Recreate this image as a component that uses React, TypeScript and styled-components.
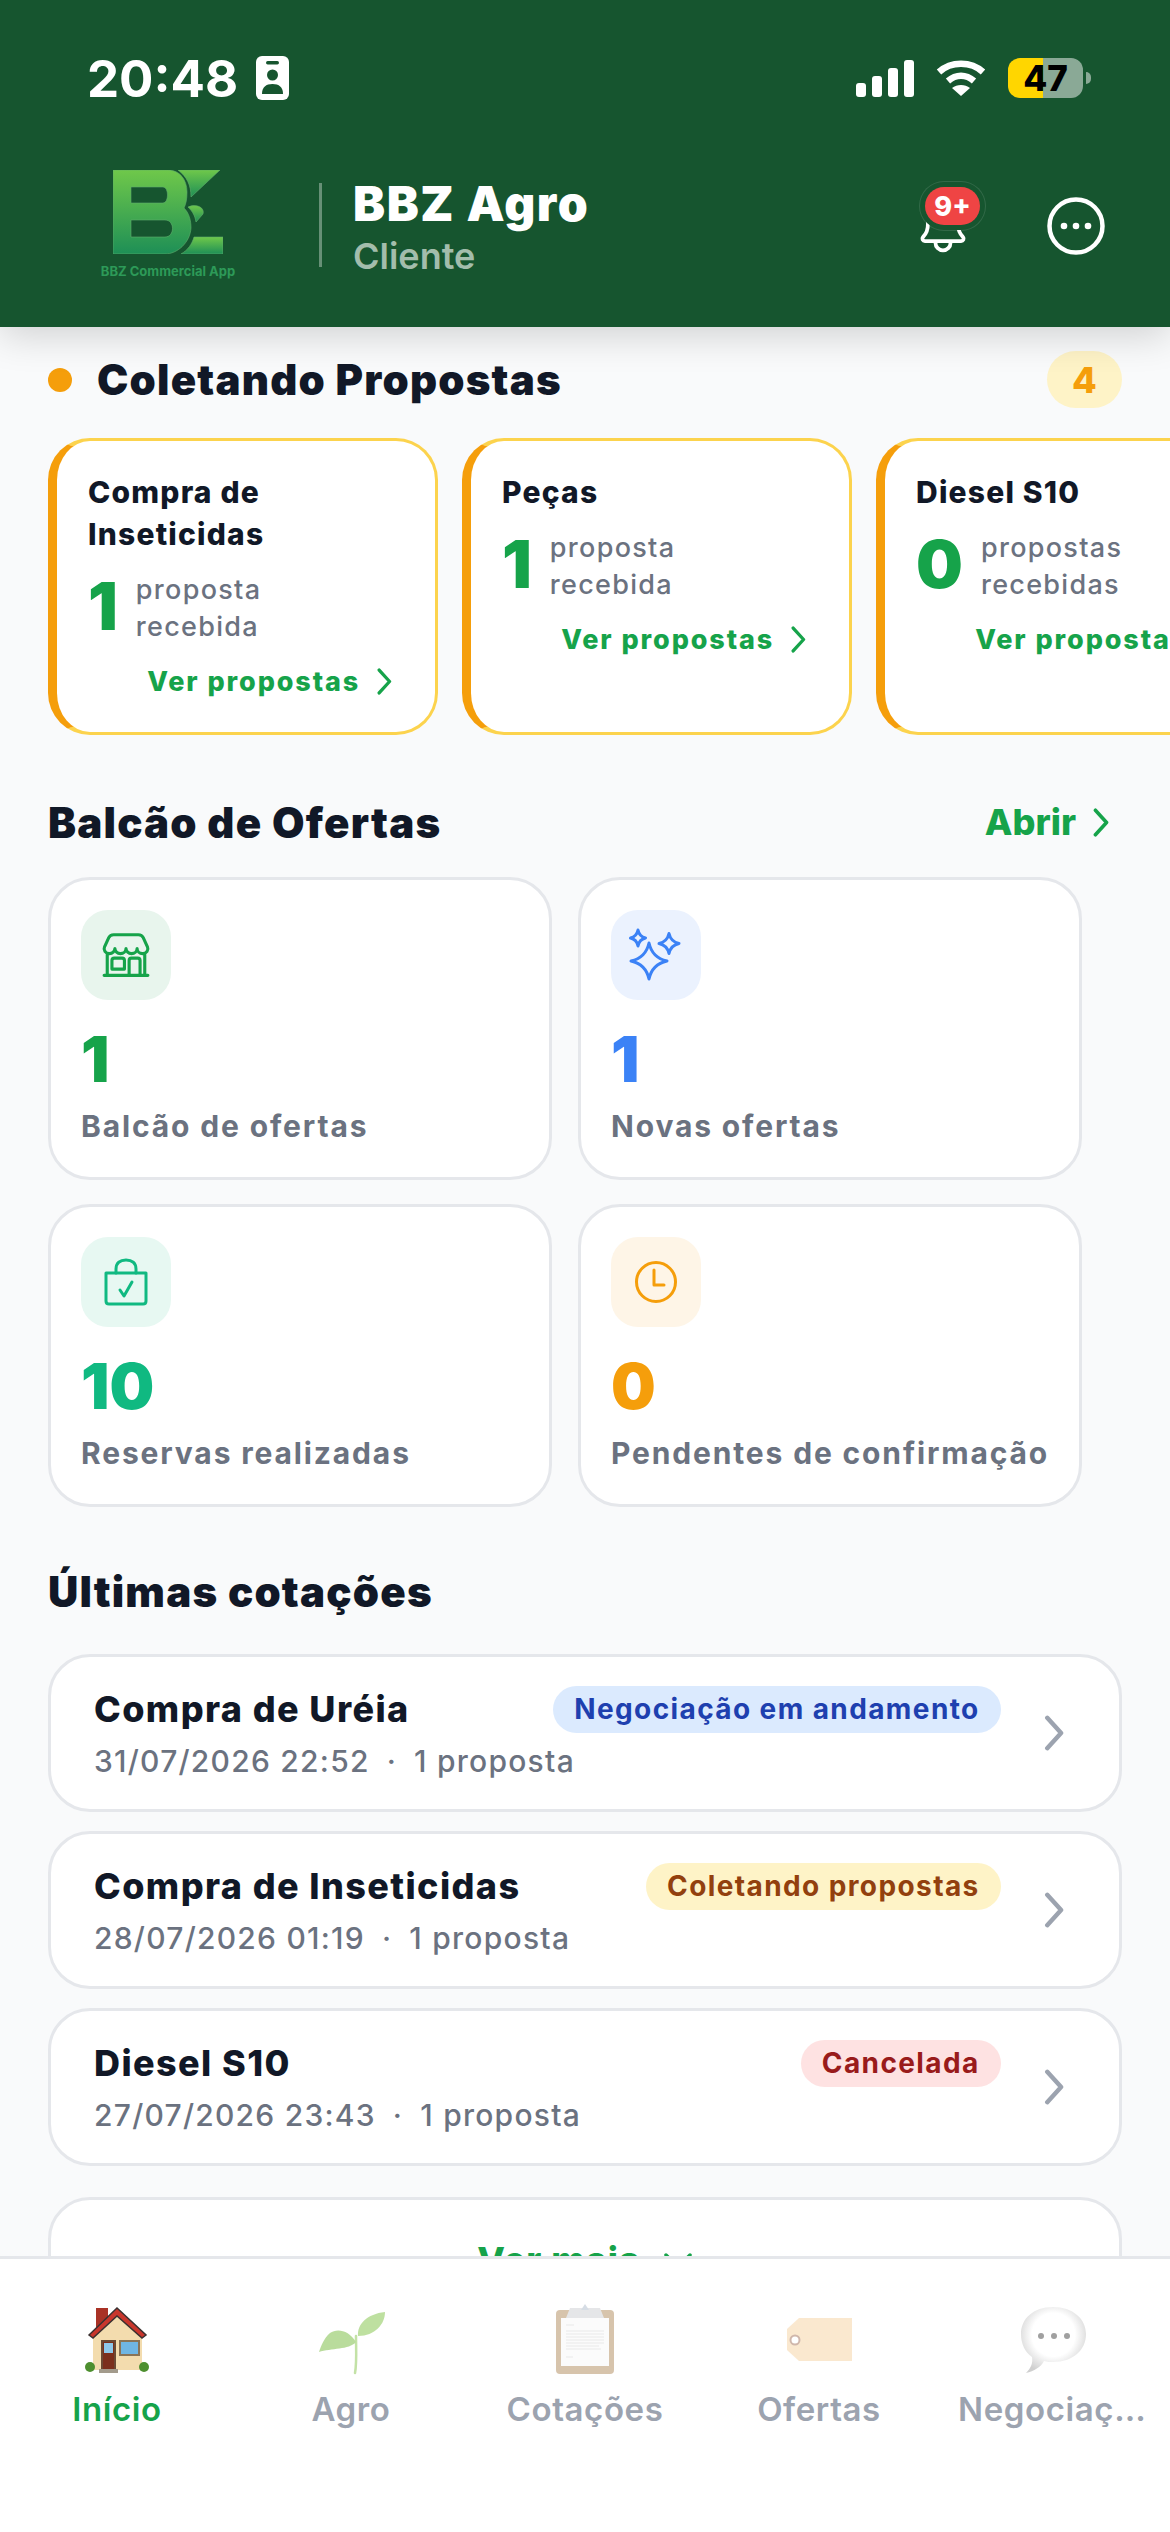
import styled, { createGlobalStyle } from "styled-components";
import { IoStorefrontOutline, IoNotificationsOutline } from "react-icons/io5";

const GlobalStyle = createGlobalStyle`
  html, body { margin: 0; padding: 0; background: #f9fafb; }
  * { box-sizing: border-box; }
  body { font-family: "Inter", "Liberation Sans", sans-serif; }
`;

const Chevron = ({ color, size = 27 }: { color: string; size?: number }) => (
  <svg width={size * 0.62} height={size} viewBox="0 0 16 26" fill="none">
    <path d="M3 2l10 11L3 24" stroke={color} strokeWidth="3.2" strokeLinecap="round" strokeLinejoin="round" />
  </svg>
);

const Logo = () => (
  <svg width="110" height="84" viewBox="0 0 110 84">
    <defs>
      <linearGradient id="bbz" x1="0" y1="0" x2="0" y2="1">
        <stop offset="0" stopColor="#6fc84a" />
        <stop offset="1" stopColor="#1e8f56" />
      </linearGradient>
    </defs>
    <g fill="url(#bbz)" stroke="#5fae6c" strokeWidth="0.6">
      <path
        fillRule="evenodd"
        d="M0 0H55C67 0 74 10 74 22C74 29 73 34 71 38C76 43 78 50 78 58C77 73 64 84 52 84H0ZM18 17V33H50C56 33 56 17 50 17ZM18 50V67H52C62 67 62 50 52 50Z"
      />
      <path d="M65 0H107L78 27C78 15 74 7 65 0Z" />
      <path d="M75 37C84 33 92 38 90 44L83 52C82 46 80 42 75 37Z" />
      <path d="M81 67H110V84H68C75 80 79 74 81 67Z" />
    </g>
  </svg>
);

// four pointed star with concave sides
const star = (cx: number, cy: number, w: number, h: number) => {
  const kx = w * 0.18;
  const ky = h * 0.18;
  return `M${cx} ${cy - h}Q${cx + kx} ${cy - ky} ${cx + w} ${cy}Q${cx + kx} ${cy + ky} ${cx} ${cy + h}Q${cx - kx} ${cy + ky} ${cx - w} ${cy}Q${cx - kx} ${cy - ky} ${cx} ${cy - h}Z`;
};

const SparkleIcon = () => (
  <svg width="54" height="54" viewBox="0 0 54 54" fill="none" stroke="#3b82f6" strokeWidth="3" strokeLinejoin="round">
    <path d={star(20, 33, 18, 18)} />
    <path d={star(9, 10, 7.5, 8)} />
    <path d={star(40, 15.5, 10, 10)} />
  </svg>
);

const BagIcon = () => (
  <svg width="48" height="48" viewBox="0 0 48 48" fill="none" stroke="#10b981" strokeWidth="3" strokeLinecap="round" strokeLinejoin="round">
    <path d="M4 15H44V43C44 45 43 46 41 46H7C5 46 4 45 4 43Z" />
    <path d="M14 15V11C14 5 18 2 24 2C30 2 34 5 34 11V15" />
    <path d="M18 32L22 38L30 24" />
  </svg>
);

const ClockIcon = () => (
  <svg width="44" height="44" viewBox="0 0 44 44" fill="none" stroke="#f59e0b" strokeWidth="3" strokeLinecap="round" strokeLinejoin="round">
    <circle cx="22" cy="22" r="19.500" />
    <path d="M20 10V25H30" />
  </svg>
);

const HouseEmoji = () => (
  <svg width="72" height="72" viewBox="0 0 72 72">
    <rect x="15" y="4" width="12" height="20" fill="#a93226" />
    <path d="M12 30L36 8L61 30V66H12Z" fill="#f3dcae" />
    <path d="M8 31L36 4L65 31L61 34L36 12L12 34Z" fill="#c9362c" stroke="#3b3030" strokeWidth="1.500" />
    <rect x="20" y="36" width="15" height="30" fill="#6b4a34" />
    <rect x="22" y="38" width="11" height="27" fill="#7b2f1c" />
    <rect x="23" y="39" width="9" height="10" fill="#8ec8ea" />
    <rect x="38" y="36" width="21" height="16" fill="#8a7456" />
    <rect x="40" y="38" width="17" height="12" fill="#6fb6e4" />
    <circle cx="9" cy="63" r="5" fill="#4d8f2f" />
    <circle cx="63" cy="63" r="5" fill="#4d8f2f" />
    <rect x="18" y="65" width="19" height="4" fill="#a39b8c" />
  </svg>
);

const SeedlingEmoji = () => (
  <svg width="72" height="72" viewBox="0 0 72 72" opacity="0.6">
    <path d="M41 32C41 46 42 58 40 69" stroke="#9ccf6c" strokeWidth="2.500" fill="none" strokeLinecap="round" />
    <path d="M43 32C42 20 52 10 70 8C70 20 60 32 43 32Z" fill="#94cc62" />
    <path d="M41 38C34 26 22 24 15 29C9 34 6 42 4 48C16 44 34 46 41 38Z" fill="#8cc65c" />
  </svg>
);

const ClipboardEmoji = () => (
  <svg width="72" height="72" viewBox="0 0 72 72" opacity="0.55">
    <rect x="7" y="6" width="58" height="64" rx="4" fill="#b7946a" />
    <rect x="12" y="14" width="48" height="48" fill="#f8f8f8" />
    <path d="M21 4H51L55 14H17Z" fill="#d0d3d6" />
    <path d="M36 0L40 6H32Z" fill="#b6c2d0" />
    <path d="M17 21H25M17 27H55M17 30H55M17 33H55M17 36H55M17 39H55M17 42H50M17 45H52M17 53H24" stroke="#d2d2d2" strokeWidth="0.8" />
  </svg>
);

const TagEmoji = () => (
  <svg width="72" height="72" viewBox="0 0 72 72" opacity="0.5">
    <path d="M16 14H69V57H16L4 46V25Z" fill="#f7d3a1" />
    <circle cx="12" cy="36" r="4.500" fill="#fff" stroke="#a3715a" strokeWidth="2" />
  </svg>
);

const SpeechEmoji = () => (
  <svg width="72" height="72" viewBox="0 0 72 72">
    <defs>
      <radialGradient id="bubble" cx="0.5" cy="0.42" r="0.6">
        <stop offset="0.55" stopColor="#ffffff" />
        <stop offset="1" stopColor="#cfcfcf" />
      </radialGradient>
    </defs>
    <path d="M36 3C56 3 69 15 69 30C69 46 56 58 36 58C33 58 30 58 27 57C24 63 17 67 9 69C14 64 16 59 15 53C8 48 4 40 4 30C4 15 16 3 36 3Z" fill="url(#bubble)" />
    <circle cx="24" cy="32" r="3" fill="#a0a0a0" />
    <circle cx="37" cy="32" r="3" fill="#a0a0a0" />
    <circle cx="50" cy="32" r="3" fill="#a0a0a0" />
  </svg>
);

const collecting = [
  { title: "Compra de Inseticidas", count: 1, label: "proposta recebida" },
  { title: "Peças", count: 1, label: "proposta recebida" },
  { title: "Diesel S10", count: 0, label: "propostas recebidas" },
];

const stats = [
  { icon: <IoStorefrontOutline size={50} color="#16a34a" />, bg: "#e8f5ed", color: "#16a34a", value: "1", label: "Balcão de ofertas" },
  { icon: <SparkleIcon />, bg: "#ebf2fe", color: "#3b82f6", value: "1", label: "Novas ofertas" },
  { icon: <BagIcon />, bg: "#e7f8f2", color: "#10b981", value: "10", label: "Reservas realizadas" },
  { icon: <ClockIcon />, bg: "#fef5e7", color: "#f59e0b", value: "0", label: "Pendentes de confirmação" },
];

const quotes = [
  { title: "Compra de Uréia", date: "31/07/2026 22:52", status: "Negociação em andamento", bg: "#dbeafe", color: "#1e40af" },
  { title: "Compra de Inseticidas", date: "28/07/2026 01:19", status: "Coletando propostas", bg: "#fef3c7", color: "#92400e" },
  { title: "Diesel S10", date: "27/07/2026 23:43", status: "Cancelada", bg: "#fee2e2", color: "#991b1b" },
];

const tabs = [
  { icon: <HouseEmoji />, label: "Início", active: true },
  { icon: <SeedlingEmoji />, label: "Agro" },
  { icon: <ClipboardEmoji />, label: "Cotações" },
  { icon: <TagEmoji />, label: "Ofertas" },
  { icon: <SpeechEmoji />, label: "Negociações" },
];

export default function App() {
  return (
    <Screen>
      <GlobalStyle />
      <Header>
        <StatusBar>
          <StatusLeft>
            <Time>20:48</Time>
            <svg width="33" height="44" viewBox="0 0 33 44">
              <rect width="33" height="44" rx="6" fill="#fff" />
              <rect x="10" y="5" width="13" height="3.500" rx="1.700" fill="#16552f" />
              <circle cx="16.500" cy="19" r="5.500" fill="#16552f" />
              <path d="M6 38C6 31 10 28 16.500 28C23 28 27 31 27 38Z" fill="#16552f" />
            </svg>
          </StatusLeft>
          <StatusRight>
            <svg width="60" height="37" viewBox="0 0 60 37" fill="#fff">
              <rect x="0" y="23" width="10" height="14" rx="3" />
              <rect x="16" y="16" width="10" height="21" rx="3" />
              <rect x="32" y="8" width="10" height="29" rx="3" />
              <rect x="48" y="0" width="10" height="37" rx="3" />
            </svg>
            <svg width="50" height="37" viewBox="0 0 50 37" fill="none" stroke="#fff" strokeWidth="6.500">
              <path d="M3 12C15 1 35 1 47 12" />
              <path d="M12 21C20 14 30 14 38 21" />
              <path d="M25 36L16 28C21 24 29 24 34 28Z" fill="#fff" stroke="none" />
            </svg>
            <Battery>
              <BatteryText>47</BatteryText>
            </Battery>
            <BatteryCap />
          </StatusRight>
        </StatusBar>
        <AppBar>
          <LogoBlock>
            <Logo />
            <LogoText>BBZ Commercial App</LogoText>
          </LogoBlock>
          <Divider />
          <Titles>
            <AppTitle>BBZ Agro</AppTitle>
            <AppRole>Cliente</AppRole>
          </Titles>
          <Actions>
            <BellWrap>
              <IoNotificationsOutline size={60} color="#fff" />
              <BellBadge>9+</BellBadge>
            </BellWrap>
            <svg width="58" height="58" viewBox="0 0 58 58" fill="none">
              <circle cx="29" cy="29" r="26.500" stroke="#fff" strokeWidth="4.500" />
              <circle cx="17" cy="29" r="3.300" fill="#fff" />
              <circle cx="29" cy="29" r="3.300" fill="#fff" />
              <circle cx="41" cy="29" r="3.300" fill="#fff" />
            </svg>
          </Actions>
        </AppBar>
      </Header>

      <Main>
        <CollectingHead>
          <Dot />
          <CollectingTitle>Coletando Propostas</CollectingTitle>
          <CountBadge>4</CountBadge>
        </CollectingHead>
        <Strip>
          {collecting.map((c) => (
            <ProposalCard key={c.title}>
              <ProposalTitle>{c.title}</ProposalTitle>
              <ProposalCount>
                <BigCount>{c.count}</BigCount>
                <CountLabel>{c.label}</CountLabel>
              </ProposalCount>
              <SeeLink>
                Ver propostas <Chevron color="#16a34a" />
              </SeeLink>
            </ProposalCard>
          ))}
        </Strip>

        <SectionHead>
          <SectionTitle>Balcão de Ofertas</SectionTitle>
          <OpenLink>
            Abrir <Chevron color="#16a34a" size={29} />
          </OpenLink>
        </SectionHead>
        <StatGrid>
          {stats.map((s) => (
            <StatCard key={s.label}>
              <IconBox $bg={s.bg}>{s.icon}</IconBox>
              <StatValue $color={s.color}>{s.value}</StatValue>
              <StatLabel>{s.label}</StatLabel>
            </StatCard>
          ))}
        </StatGrid>

        <SectionHead $top={58}>
          <SectionTitle>Últimas cotações</SectionTitle>
        </SectionHead>
        <QuoteList>
          {quotes.map((q) => (
            <QuoteCard key={q.title}>
              <QuoteBody>
                <QuoteTop>
                  <QuoteTitle>{q.title}</QuoteTitle>
                  <Pill $bg={q.bg} $color={q.color}>{q.status}</Pill>
                </QuoteTop>
                <QuoteMeta>
                  {q.date}
                  <MetaDot>·</MetaDot>1 proposta
                </QuoteMeta>
              </QuoteBody>
              <Chevron color="#9ca3af" size={36} />
            </QuoteCard>
          ))}
          <MoreCard>
            Ver mais
            <svg width="30" height="18" viewBox="0 0 30 18" fill="none">
              <path d="M3 3l12 12L27 3" stroke="#16a34a" strokeWidth="3.500" strokeLinecap="round" />
            </svg>
          </MoreCard>
        </QuoteList>
      </Main>

      <TabBar>
        {tabs.map((t) => (
          <Tab key={t.label}>
            <TabIcon>{t.icon}</TabIcon>
            <TabLabel $active={!!t.active}>{t.label}</TabLabel>
          </Tab>
        ))}
      </TabBar>
    </Screen>
  );
}

const Screen = styled.div`
  width: 1170px;
  height: 2532px;
  display: flex;
  flex-direction: column;
  overflow: hidden;
  background: #f9fafb;
`;

const Header = styled.header`
  position: relative;
  z-index: 2;
  height: 327px;
  flex-shrink: 0;
  padding-top: 57px;
  background: #16552f;
  box-shadow: 0 9px 36px rgba(0, 0, 0, 0.16);
`;

const StatusBar = styled.div`
  display: flex;
  justify-content: space-between;
  align-items: center;
  height: 42px;
  padding: 0 79px 0 87px;
`;

const StatusLeft = styled.div`
  display: flex;
  align-items: center;
  gap: 18px;
`;

const Time = styled.span`
  font-size: 51px;
  font-weight: 700;
  color: #fff;
`;

const StatusRight = styled.div`
  display: flex;
  align-items: center;
  gap: 20px;
`;

const Battery = styled.div`
  width: 75px;
  height: 40px;
  margin-left: 2px;
  border-radius: 12px;
  display: flex;
  align-items: center;
  justify-content: center;
  background: linear-gradient(90deg, #ffd600 0, #ffd600 47%, #8aa996 47%, #8aa996 100%);
`;

const BatteryText = styled.span`
  font-size: 35px;
  font-weight: 800;
  color: #000;
`;

const BatteryCap = styled.div`
  width: 5px;
  height: 12px;
  margin-left: -17px;
  border-radius: 0 6px 6px 0;
  background: #8aa996;
`;

const AppBar = styled.div`
  display: flex;
  align-items: flex-start;
  margin-top: 71px;
  padding: 0 65px 0 100px;
`;

const LogoBlock = styled.div`
  width: 134px;
  display: flex;
  flex-direction: column;
  align-items: center;
  padding-left: 2px;
`;

const LogoText = styled.span`
  margin-top: 9px;
  font-size: 13px;
  font-weight: 700;
  white-space: nowrap;
  color: #2d9a58;
`;

const Divider = styled.div`
  width: 3px;
  height: 84px;
  margin: 13px 31px 0 85px;
  background: rgba(255, 255, 255, 0.35);
`;

const Titles = styled.div`
  display: flex;
  flex-direction: column;
  padding-top: 8px;
`;

const AppTitle = styled.span`
  font-size: 48px;
  font-weight: 900;
  line-height: 52px;
  letter-spacing: 1.600px;
  color: #fff;
`;

const AppRole = styled.span`
  margin-top: 3px;
  font-size: 36px;
  font-weight: 600;
  line-height: 46px;
  color: #a3bdac;
`;

const Actions = styled.div`
  margin-left: auto;
  display: flex;
  align-items: center;
  gap: 74px;
  padding-top: 26px;
`;

const BellWrap = styled.div`
  position: relative;
  width: 60px;
  height: 60px;
`;

const BellBadge = styled.span`
  position: absolute;
  top: -9px;
  left: 12px;
  width: 55px;
  height: 38px;
  border-radius: 19px;
  display: flex;
  align-items: center;
  justify-content: center;
  background: #ef4444;
  box-shadow: 0 0 0 5px #16552f, 0 0 0 6px rgba(255, 255, 255, 0.12);
  color: #fff;
  font-size: 27px;
  font-weight: 800;
`;

const Main = styled.main`
  flex: 1;
  min-height: 0;
  overflow: hidden;
  padding-top: 24px;
`;

const CollectingHead = styled.div`
  display: flex;
  align-items: center;
  padding: 0 48px;
  height: 57px;
`;

const Dot = styled.span`
  width: 24px;
  height: 24px;
  border-radius: 50%;
  background: #f59e0b;
`;

const CollectingTitle = styled.h2`
  margin: 0 0 0 25px;
  flex: 1;
  font-size: 42px;
  font-weight: 900;
  letter-spacing: 1.200px;
  color: #111827;
`;

const CountBadge = styled.span`
  width: 75px;
  height: 57px;
  border-radius: 29px;
  display: flex;
  align-items: center;
  justify-content: center;
  background: #fef3c7;
  color: #f59e0b;
  font-size: 36px;
  font-weight: 800;
`;

const Strip = styled.div`
  display: flex;
  gap: 24px;
  margin-top: 30px;
  padding-left: 48px;
  overflow: hidden;
`;

const ProposalCard = styled.article`
  width: 390px;
  height: 297px;
  flex-shrink: 0;
  display: flex;
  flex-direction: column;
  padding: 30px 42px 0 31px;
  background: #fff;
  border: 3px solid #fcd34d;
  border-left: 9px solid #f59e0b;
  border-radius: 42px;
`;

const ProposalTitle = styled.h3`
  margin: 0;
  font-size: 30px;
  font-weight: 800;
  line-height: 42px;
  letter-spacing: 1.200px;
  color: #111827;
`;

const ProposalCount = styled.div`
  display: flex;
  align-items: center;
  gap: 18px;
  margin-top: 11px;
`;

const BigCount = styled.span`
  font-size: 66px;
  font-weight: 900;
  line-height: 72px;
  color: #16a34a;
`;

const CountLabel = styled.span`
  width: 170px;
  margin-top: 5px;
  font-size: 27px;
  font-weight: 500;
  line-height: 37px;
  letter-spacing: 1.300px;
  color: #6b7280;
`;

const SeeLink = styled.div`
  display: flex;
  align-items: center;
  justify-content: flex-end;
  gap: 16px;
  margin-top: 20px;
  font-size: 27px;
  font-weight: 800;
  letter-spacing: 1.900px;
  white-space: nowrap;
  color: #16a34a;
`;

const SectionHead = styled.div<{ $top?: number }>`
  display: flex;
  align-items: center;
  justify-content: space-between;
  height: 52px;
  margin-top: ${(p) => p.$top ?? 61}px;
  padding: 0 48px;
`;

const SectionTitle = styled.h2`
  margin: 0;
  font-size: 42px;
  font-weight: 900;
  letter-spacing: 1.200px;
  color: #111827;
`;

const OpenLink = styled.div`
  display: flex;
  align-items: center;
  gap: 16px;
  margin-right: 12px;
  font-size: 36px;
  font-weight: 800;
  color: #16a34a;
`;

const StatGrid = styled.div`
  display: grid;
  grid-template-columns: 504px 504px;
  grid-auto-rows: 303px;
  gap: 24px 26px;
  margin-top: 29px;
  padding-left: 48px;
`;

const StatCard = styled.article`
  display: flex;
  flex-direction: column;
  align-items: flex-start;
  padding: 30px 30px 0;
  background: #fff;
  border: 3px solid #e5e7eb;
  border-radius: 42px;
`;

const IconBox = styled.div<{ $bg: string }>`
  width: 90px;
  height: 90px;
  border-radius: 27px;
  display: flex;
  align-items: center;
  justify-content: center;
  background: ${(p) => p.$bg};
`;

const StatValue = styled.div<{ $color: string }>`
  margin-top: 21px;
  font-size: 63px;
  font-weight: 900;
  line-height: 76px;
  color: ${(p) => p.$color};
`;

const StatLabel = styled.div`
  margin-top: 9px;
  font-size: 30px;
  font-weight: 700;
  line-height: 40px;
  letter-spacing: 1.850px;
  white-space: nowrap;
  color: #6b7280;
`;

const QuoteList = styled.div`
  display: flex;
  flex-direction: column;
  gap: 19px;
  margin-top: 37px;
  padding: 0 48px;
`;

const QuoteCard = styled.article`
  height: 158px;
  display: flex;
  align-items: center;
  padding: 0 54px 0 43px;
  background: #fff;
  border: 3px solid #e5e7eb;
  border-radius: 42px;
`;

const QuoteBody = styled.div`
  flex: 1;
  margin-right: 42px;
`;

const QuoteTop = styled.div`
  display: flex;
  align-items: center;
  justify-content: space-between;
  height: 47px;
`;

const QuoteTitle = styled.h3`
  margin: 0;
  font-size: 36px;
  font-weight: 800;
  letter-spacing: 1.400px;
  color: #111827;
`;

const Pill = styled.span<{ $bg: string; $color: string }>`
  height: 47px;
  padding: 0 21px;
  border-radius: 24px;
  display: flex;
  align-items: center;
  background: ${(p) => p.$bg};
  color: ${(p) => p.$color};
  font-size: 28px;
  font-weight: 700;
  letter-spacing: 1.400px;
  white-space: nowrap;
`;

const QuoteMeta = styled.div`
  margin-top: 8px;
  font-size: 30px;
  font-weight: 500;
  line-height: 40px;
  letter-spacing: 1.250px;
  color: #6b7280;
`;

const MetaDot = styled.span`
  margin: 0 17px;
`;

const MoreCard = styled.article`
  height: 158px;
  margin-top: 12px;
  padding-top: 38px;
  display: flex;
  align-items: flex-start;
  justify-content: center;
  gap: 22px;
  background: #fff;
  border: 3px solid #e5e7eb;
  border-radius: 42px;
  font-size: 36px;
  font-weight: 800;
  letter-spacing: 1px;
  color: #16a34a;
  svg {
    margin-top: 14px;
  }
`;

const TabBar = styled.nav`
  height: 276px;
  flex-shrink: 0;
  display: grid;
  grid-template-columns: repeat(5, 234px);
  padding-top: 45px;
  background: #fff;
  border-top: 3px solid #e5e7eb;
`;

const Tab = styled.div`
  display: flex;
  flex-direction: column;
  align-items: center;
  min-width: 0;
`;

const TabIcon = styled.div`
  width: 72px;
  height: 72px;
`;

const TabLabel = styled.span<{ $active: boolean }>`
  max-width: 190px;
  margin-top: 13px;
  font-size: 33px;
  font-weight: 600;
  line-height: 40px;
  letter-spacing: 0.600px;
  overflow: hidden;
  white-space: nowrap;
  text-overflow: ellipsis;
  color: ${(p) => (p.$active ? "#16a34a" : "#9ca3af")};
`;
